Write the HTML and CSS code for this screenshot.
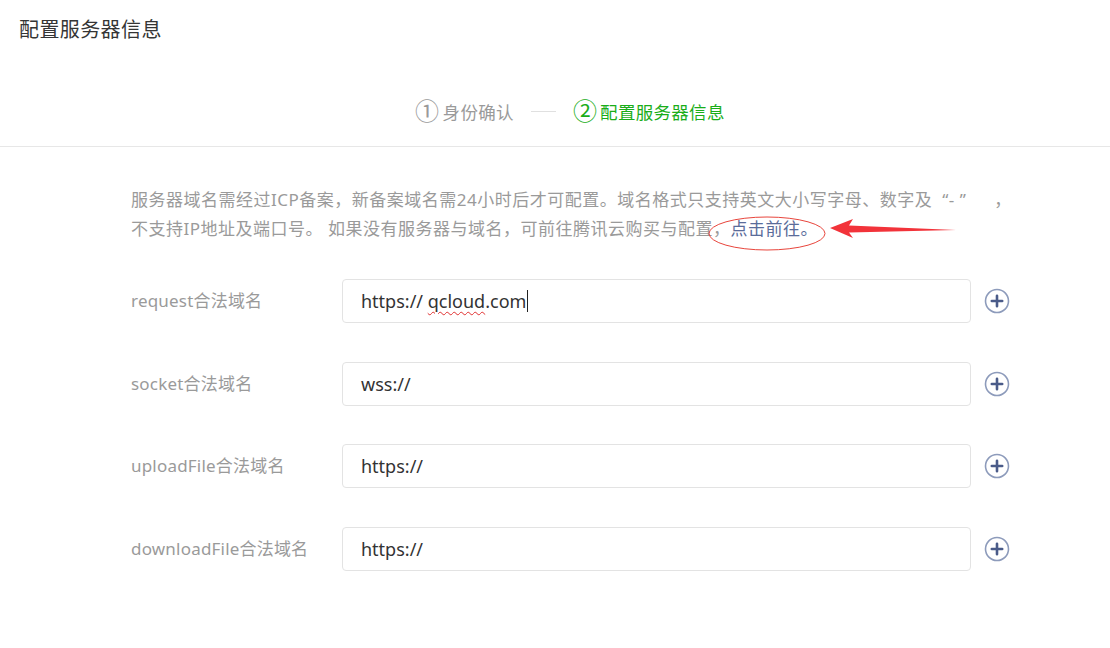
FILE: index.html
```html
<!DOCTYPE html>
<html lang="zh-CN">
<head>
    <meta charset="UTF-8">
    <meta name="viewport" content="width=device-width, initial-scale=1.0">
    <title>配置服务器信息</title>
    <link rel="stylesheet" href="styles.css">
</head>
<body>
    <div class="page-title">配置服务器信息</div>

    <div class="steps">
        <div class="step">
            <span class="step-num">①</span>
            <span>身份确认</span>
        </div>
        <div class="step-line"></div>
        <div class="step step-active">
            <span class="step-num">②</span>
            <span>配置服务器信息</span>
        </div>
    </div>

    <div class="content">
        <p class="notice">
            服务器域名需经过ICP备案，新备案域名需24小时后才可配置。域名格式只支持英文大小写字母、数字及<span class="quote">“- ”</span>，<br>
            不支持IP地址及端口号。 如果没有服务器与域名，可前往腾讯云购买与配置，<a href="#" class="notice-link">点击前往。</a>
        </p>

        <!-- пометка на скриншоте: овал и стрелка -->
        <svg class="mark" width="1110" height="648" viewBox="0 0 1110 648">
            <ellipse cx="767" cy="233.5" rx="58" ry="16.5" fill="none" stroke="#e8453c" stroke-width="1"/>
            <polygon points="830,228 853,219 849,225.5 956,230 849,232.5 853,238" fill="#f2333a"/>
        </svg>

        <div class="form">
            <div class="form-row">
                <div class="form-label">request合法域名</div>
                <div class="form-field">https:// <span class="typo">qcloud</span>.com<span class="caret"></span></div>
                <button class="add-btn">
                    <svg width="26" height="26" viewBox="0 0 26 26">
                        <circle cx="13" cy="13" r="11.5" fill="none" stroke="#8d9bbb" stroke-width="1.6"/>
                        <path d="M13 7.8v10.4M7.8 13h10.4" stroke="#4a5b89" stroke-width="2.6" stroke-linecap="round"/>
                    </svg>
                </button>
            </div>
            <div class="form-row">
                <div class="form-label">socket合法域名</div>
                <div class="form-field">wss://</div>
                <button class="add-btn">
                    <svg width="26" height="26" viewBox="0 0 26 26">
                        <circle cx="13" cy="13" r="11.5" fill="none" stroke="#8d9bbb" stroke-width="1.6"/>
                        <path d="M13 7.8v10.4M7.8 13h10.4" stroke="#4a5b89" stroke-width="2.6" stroke-linecap="round"/>
                    </svg>
                </button>
            </div>
            <div class="form-row">
                <div class="form-label">uploadFile合法域名</div>
                <div class="form-field">https://</div>
                <button class="add-btn">
                    <svg width="26" height="26" viewBox="0 0 26 26">
                        <circle cx="13" cy="13" r="11.5" fill="none" stroke="#8d9bbb" stroke-width="1.6"/>
                        <path d="M13 7.8v10.4M7.8 13h10.4" stroke="#4a5b89" stroke-width="2.6" stroke-linecap="round"/>
                    </svg>
                </button>
            </div>
            <div class="form-row">
                <div class="form-label">downloadFile合法域名</div>
                <div class="form-field">https://</div>
                <button class="add-btn">
                    <svg width="26" height="26" viewBox="0 0 26 26">
                        <circle cx="13" cy="13" r="11.5" fill="none" stroke="#8d9bbb" stroke-width="1.6"/>
                        <path d="M13 7.8v10.4M7.8 13h10.4" stroke="#4a5b89" stroke-width="2.6" stroke-linecap="round"/>
                    </svg>
                </button>
            </div>
        </div>
    </div>
</body>
</html>
```

FILE: styles.css
```css
body {
    margin: 0;
    font-family: "Noto Sans", "Noto Sans CJK SC", sans-serif;
    background-color: #fff;
    color: #333;
    position: relative;
}
.page-title {
    padding: 18px 19px 0;
    height: 42px;
    font-size: 20px;
    letter-spacing: 0.4px;
    line-height: 24px;
    color: #353535;
}
.steps {
    display: flex;
    justify-content: center;
    align-items: center;
    gap: 17px;
    height: 87px;
    padding-top: 17px;
    padding-left: 30px;
    box-sizing: border-box;
    border-bottom: 1px solid #e7e7e7;
    font-size: 17.5px;
    letter-spacing: 0.3px;
    color: #9a9a9a;
}
.step {
    display: flex;
    align-items: center;
    gap: 3px;
}
.step-num {
    font-size: 24px;
    line-height: 24px;
    font-family: "DejaVu Sans", sans-serif;
    font-weight: 300;
}
.step-active {
    color: #1aad19;
}
.step-line {
    width: 25px;
    height: 1px;
    background: #e0e0e0;
}
.content {
    padding: 0 131px;
}
.notice {
    margin: 38px 0 0;
    font-size: 17px;
    letter-spacing: 0.5px;
    line-height: 29px;
    color: #9a9a9a;
    white-space: nowrap;
}
.quote {
    margin: 0 28px 0 10px;
}
.notice-link {
    color: #5a6c9a;
    text-decoration: none;
}
.mark {
    position: absolute;
    left: 0;
    top: 0;
    pointer-events: none;
}
.form {
    margin-top: 36px;
}
.form-row {
    display: flex;
    align-items: center;
    margin-bottom: 38.5px;
}
.form-label {
    width: 211px;
    flex-shrink: 0;
    font-size: 17px;
    letter-spacing: 0.2px;
    color: #9a9a9a;
    margin-top: -3px;
}
.form-field {
    width: 629px;
    height: 44px;
    flex-shrink: 0;
    box-sizing: border-box;
    border: 1px solid #e3e3e3;
    border-radius: 4px;
    padding-left: 18px;
    display: flex;
    align-items: center;
    font-size: 18px;
    color: #333;
    white-space: pre;
}
.typo {
    text-decoration: underline wavy #e03030;
    text-decoration-thickness: 1px;
    text-underline-offset: 3px;
}
.caret {
    display: inline-block;
    width: 1px;
    height: 22px;
    background: #222;
    margin-left: 1px;
}
.add-btn {
    flex-shrink: 0;
    margin-left: 13px;
    padding: 0;
    border: none;
    background: none;
    display: flex;
    cursor: pointer;
}
```
